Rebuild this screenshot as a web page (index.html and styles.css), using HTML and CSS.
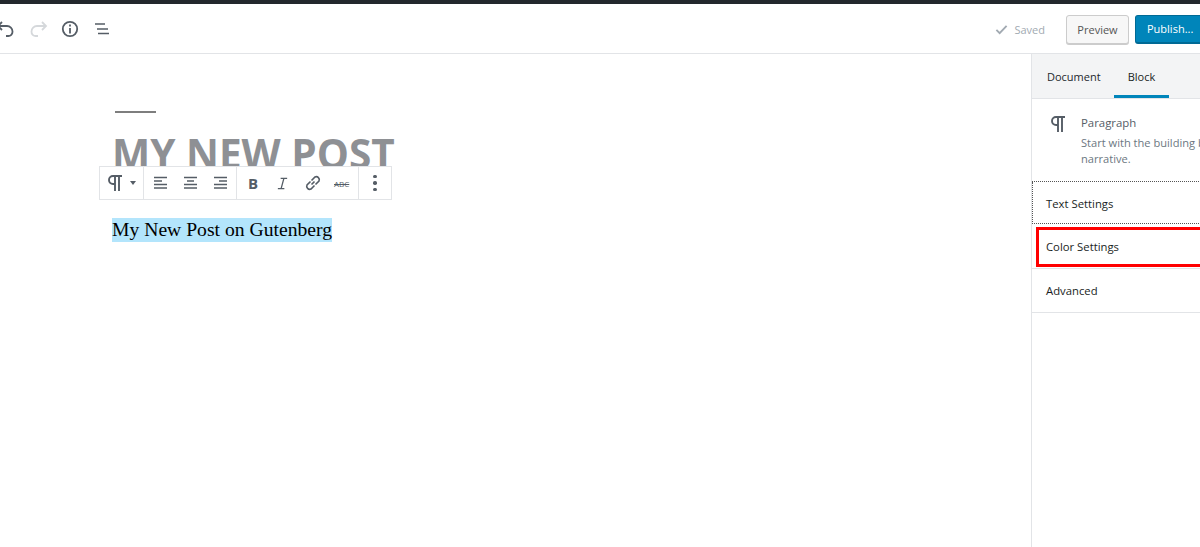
FILE: index.html
```html
<!DOCTYPE html>
<html lang="en">
<head>
<meta charset="utf-8">
<title>Edit Post</title>
<link rel="stylesheet" href="styles.css">
</head>
<body>
<div class="adminbar"></div>
<header class="topbar">
  <div class="tools">
    <svg class="icon undo" viewBox="0 0 20 20"><path d="M6 3 2 7l4 4M2 7h9a5.500 5.500 0 0 1 5.500 5.500 4.200 4.200 0 0 1-4.500 4.500h-2" /></svg>
    <svg class="icon redo" viewBox="0 0 20 20"><path d="M14 3l4 4-4 4M18 7H9a5.500 5.500 0 0 0-5.500 5.500A4.200 4.200 0 0 0 8 17h2" /></svg>
    <svg class="icon info" viewBox="0 0 20 20"><circle cx="10" cy="10" r="7.200"/><path d="M10 9v5.500M10 5.500v2"/></svg>
    <svg class="icon list" viewBox="0 0 20 20"><path d="M3 5h10M5 10h11M6 14.500h11"/></svg>
  </div>
  <div class="actions">
    <svg class="check" viewBox="0 0 14 14"><path d="M1.500 7.500l3.500 3.500 7.500-8"/></svg>
    <span class="saved">Saved</span>
    <button class="btn preview">Preview</button>
    <button class="btn publish">Publish...</button>
  </div>
</header>
<div class="main">
  <main class="editor">
    <div class="rule"></div>
    <h1 class="title">MY NEW POST</h1>
    <div class="toolbar">
      <div class="group g-type">
        <svg class="tb para" viewBox="0 0 14 16"><path d="M14 1H5a4 4 0 0 0 0 8h2M7 1v15M11 1v15"/></svg>
        <span class="caret"></span>
      </div>
      <div class="group g-align">
        <svg class="tb" viewBox="0 0 13 14"><path d="M0 1.500h13M0 5h8M0 8.500h13M0 12h13"/></svg>
        <svg class="tb" viewBox="0 0 13 14"><path d="M0 1.500h13M3 5h7M0 8.500h13M0 12h13"/></svg>
        <svg class="tb" viewBox="0 0 13 14"><path d="M0 1.500h13M5 5h8M0 8.500h13M0 12h13"/></svg>
      </div>
      <div class="group g-format">
        <span class="glyph bold">B</span>
        <svg class="tb italic" viewBox="0 0 14 14"><path d="M5 1.500h7M2 12.500h7M8.500 1.500 5.500 12.500"/></svg>
        <svg class="tb link" viewBox="0 0 18 18"><path d="M7.500 10.500 10.500 7.500M6.500 7.500 3 11a3 3 0 0 0 4 4l3.500-3.500M11.500 10.500 15 7a3 3 0 0 0-4-4L7.500 6.500"/></svg>
        <span class="glyph strike">ABC</span>
      </div>
      <div class="group g-more">
        <span class="dots"><i></i><i></i><i></i></span>
      </div>
    </div>
    <p class="para-text"><span class="selected">My New Post on Gutenberg</span></p>
  </main>
  <aside class="sidebar">
    <div class="tabs">
      <div class="tab">Document</div>
      <div class="tab active">Block</div>
    </div>
    <div class="card">
      <svg class="card-icon" viewBox="0 0 14 16"><path d="M14 1H5a4 4 0 0 0 0 8h2M7 1v15M11 1v15"/></svg>
      <div class="card-text">
        <div class="card-title">Paragraph</div>
        <div class="card-desc">Start with the building block of all narrative.</div>
      </div>
    </div>
    <div class="panel focused">Text Settings</div>
    <div class="panel highlighted">Color Settings<span class="redbox"></span></div>
    <div class="panel">Advanced</div>
  </aside>
</div>
</body>
</html>
```
FILE: styles.css
```css
* { box-sizing: border-box; }
html, body { margin: 0; height: 100%; overflow: hidden; background: #fff; }
body { width: 1200px; height: 547px; font-family: "Open Sans", "Noto Sans", sans-serif; font-size: 11px; color: #23282d; }

.adminbar { height: 4px; background: #23282d; }
.topbar { height: 50px; display: flex; justify-content: space-between; align-items: center; border-bottom: 1px solid #e2e4e7; padding-top: 1px; }
.tools { display: flex; align-items: center; gap: 12px; margin-left: -4px; }
.icon { width: 20px; height: 20px; fill: none; stroke: #555d66; stroke-width: 1.8; }
.redo { stroke: #d5d8db; }
.list { stroke-width: 1.500; }
.actions { display: flex; align-items: center; flex: 0 0 auto; margin-right: -19px; }
.check { width: 13px; height: 13px; fill: none; stroke: #a2aab2; stroke-width: 2; margin-right: 6px; }
.saved { color: #a2aab2; font-size: 11px; margin-right: 21px; }
.btn { height: 29px; border-radius: 3px; font-family: inherit; font-size: 11px; padding: 0; }
.preview { width: 63px; margin-right: 6px; background: #f7f7f7; color: #555; border: 1px solid #ccc; box-shadow: 0 1px 0 #ccc; }
.publish { width: 84px; background: #0085ba; color: #fff; border: 1px solid #006a95; border-bottom-width: 2px; text-align: left; padding-left: 11px; }

.main { display: flex; height: 493px; }
.editor { position: relative; flex: 0 0 1031px; padding: 57px 0 0 112px; }
.rule { width: 41px; height: 2px; margin-left: 3px; background: #7e7e7e; }
.title { margin: 15px 0 0; font-size: 40.500px; line-height: 52px; font-weight: 700; color: #8e9094; white-space: nowrap; }
.toolbar { position: absolute; left: 99px; top: 112px; height: 34px; display: flex; background: #fff; border: 1px solid #e2e4e7; }
.group { display: flex; align-items: center; height: 100%; border-right: 1px solid #e2e4e7; }
.group:last-child { border-right: 0; }
.g-type { width: 44px; padding-left: 8px; }
.g-align { width: 93px; padding-left: 10px; gap: 17px; }
.g-format { width: 122px; padding-left: 10px; }
.g-more { width: 32px; justify-content: center; }
.tb { width: 13px; height: 14px; fill: none; stroke: #555d66; stroke-width: 1.700; flex: 0 0 auto; }
.para { width: 14px; height: 16px; stroke-width: 1.900; }
.caret { margin-left: 8px; border: 3px solid transparent; border-top: 4px solid #555d66; border-bottom: 0; }
.glyph { color: #555d66; }
.bold { font-size: 15px; font-weight: 700; width: 12px; text-align: center; }
.italic { margin-left: 17px; height: 13px; stroke-width: 1.400; }
.link { width: 18px; height: 18px; margin-left: 15px; stroke-width: 1.600; }
.strike { font-size: 8px; margin-left: 12px; text-decoration: line-through; }
.dots { display: flex; flex-direction: column; gap: 3px; }
.dots i { width: 3.500px; height: 3.500px; border-radius: 50%; background: #555d66; display: block; }
.para-text { margin: 0; position: absolute; left: 112px; top: 164px; font-family: "Liberation Serif", serif; font-size: 19.650px; line-height: 22px; color: #000; white-space: nowrap; }
.selected { background: #b3e5fc; display: inline-block; padding-bottom: 2px; }

.sidebar { flex: 0 0 280px; height: 100%; border-left: 1px solid #e2e4e7; }
.tabs { height: 45px; display: flex; padding-left: 1px; background: #f3f4f5; border-bottom: 1px solid #e2e4e7; }
.tab { height: 44px; padding: 0 14px; line-height: 45px; }
.tab.active { margin-left: -1px; border-bottom: 3px solid #0085ba; color: #191e23; }
.card { display: flex; height: 83px; padding: 17px 0 0 19px; border-bottom: 1px dotted #555; }
.card-icon { width: 14px; height: 16px; fill: none; stroke: #555d66; stroke-width: 1.900; flex: 0 0 auto; }
.card-text { margin-left: 16px; margin-top: -1px; width: 205px; }
.card-title { font-size: 11.400px; line-height: 16px; color: #555d66; }
.card-desc { margin-top: 4px; font-size: 11.100px; line-height: 16px; color: #6c7781; }
.panel { position: relative; height: 44px; padding-left: 14px; line-height: 44px; font-size: 11.300px; font-weight: 500; color: #191e23; border-bottom: 1px solid #e2e4e7; }
.focused { height: 42px; line-height: 43px; border-left: 1px dotted #555; border-bottom: 1px dotted #555; padding-left: 13px; }
.highlighted { height: 45px; line-height: 46px; }
.redbox { position: absolute; left: 4px; top: 3px; width: 280px; height: 40px; border: 3px solid #f00; }
```
